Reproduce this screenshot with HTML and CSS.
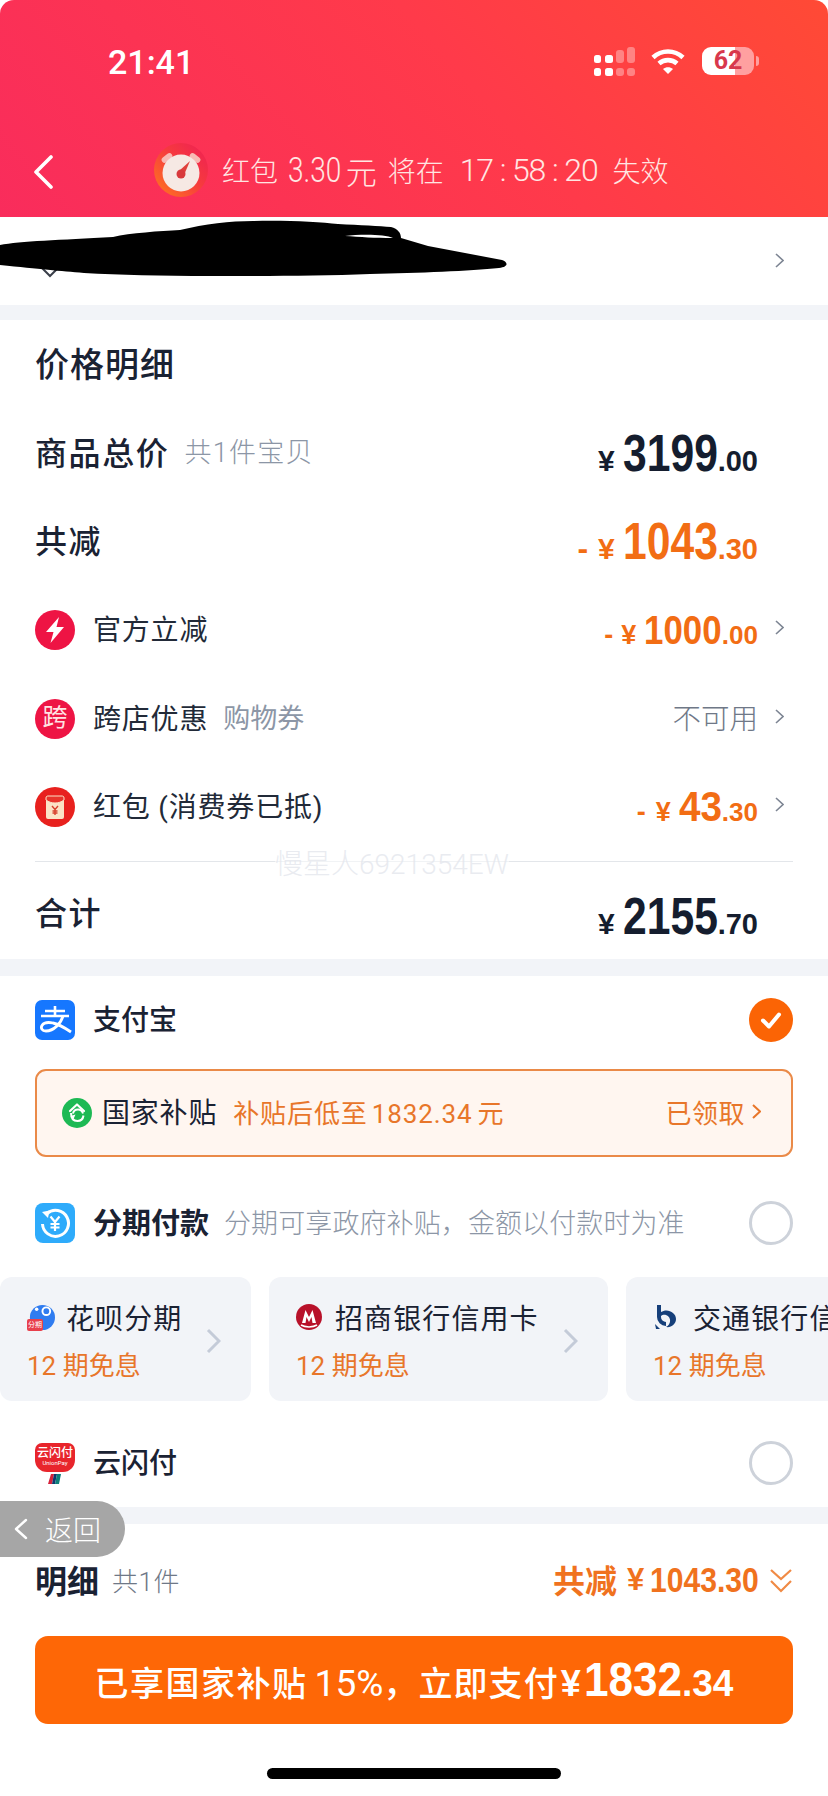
FILE: index.html
```html
<!DOCTYPE html>
<html lang="zh-CN">
<head>
    <meta charset="UTF-8">
    <meta name="viewport" content="width=device-width, initial-scale=1.0">
    <title>确认付款</title>
    <link rel="stylesheet" href="styles.css">
</head>
<body>
<div class="page">
    <header class="header">
        <div class="status">
            <span class="time">21:41</span>
            <div class="status-icons">
                <svg class="signal" width="41" height="29" viewBox="0 0 41 29" fill="#fff">
                    <rect x="0" y="8" width="7" height="8" rx="2.5"/>
                    <rect x="11" y="8" width="8" height="8" rx="2.5"/>
                    <rect x="0" y="21" width="7" height="8" rx="2.5"/>
                    <rect x="11" y="21" width="8" height="8" rx="2.5"/>
                    <g opacity=".35">
                        <rect x="22" y="3" width="8" height="13" rx="3"/>
                        <rect x="33" y="0" width="8" height="16" rx="3"/>
                        <rect x="22" y="21" width="8" height="8" rx="3"/>
                        <rect x="33" y="21" width="8" height="8" rx="3"/>
                    </g>
                </svg>
                <svg class="wifi" width="34" height="27" viewBox="0 0 34 27" fill="none" stroke="#fff" stroke-width="4.6">
                    <path d="M2 9.5C10.500 1.500 23.500 1.500 32 9.500"/>
                    <path d="M8 15.500C13 11 21 11 26 15.500"/>
                    <path d="M12 21L17 26L22 21C19 18.600 15 18.600 12 21Z" fill="#fff" stroke="none"/>
                </svg>
                <div class="battery"><span class="battery-num">62</span></div>
            </div>
        </div>
        <div class="nav">
            <svg class="nav-back" width="20" height="34" viewBox="0 0 20 34" fill="none" stroke="#fff" stroke-width="3.600" stroke-linecap="round" stroke-linejoin="round">
                <path d="M18 2L3 17L18 32"/>
            </svg>
            <svg class="clock" width="54" height="54" viewBox="0 0 54 54">
                <defs>
                    <linearGradient id="clockBg" x1="0" y1="1" x2="1" y2="0">
                        <stop offset="0" stop-color="#ff7a1e"/>
                        <stop offset=".55" stop-color="#f63a3e"/>
                        <stop offset="1" stop-color="#ee1e56"/>
                    </linearGradient>
                </defs>
                <circle cx="27" cy="27" r="27" fill="url(#clockBg)"/>
                <rect x="7" y="12" width="12" height="6" rx="3" transform="rotate(-38 13 15)" fill="#f8b9b4"/>
                <rect x="35" y="12" width="12" height="6" rx="3" transform="rotate(38 41 15)" fill="#f8b9b4"/>
                <circle cx="27" cy="30" r="18.500" fill="#f6e9e4"/>
                <path d="M25 28L36 18L30 32Z" fill="#e0403c"/>
                <circle cx="27" cy="31" r="4.500" fill="#d8393c"/>
            </svg>
            <div class="nav-text">
                <span>红包</span><span class="nav-num">3.30</span><span class="nav-unit">元</span>
                <span class="nav-gap">将在</span>
                <span class="nav-count">17 : 58 : 20</span>
                <span>失效</span>
            </div>
        </div>
    </header>

    <section class="addr-row">
        <svg class="chev" width="9" height="15" viewBox="0 0 9 15"><path d="M1 1L8 7.500L1 14"/></svg>
        <svg class="redact" width="510" height="62" viewBox="0 217 510 62">
            <path d="M42 268L50 276L58 268" fill="none" stroke="#3a3f4a" stroke-width="2"/>
            <path d="M0 245C20 241 60 240 113 237C130 233 160 231 180 230C205 224 230 221 253 221C285 220 320 222 338 224C360 225 380 226 391 227C398 229 401 233 401 238L428 246L502 260C508 262 509 267 499 268C470 271 420 273 370 274C320 276 260 276 211 276C160 276 120 275 84 273C60 271 40 269 0 265Z" fill="#000"/>
            <path d="M345 236C360 234 385 234 393 238C375 238 360 237 345 236Z" fill="#fff"/>
        </svg>
    </section>
    <div class="band"></div>

    <section class="prices">
        <div class="price-row"><h2 class="title">价格明细</h2></div>
        <div class="price-row">
            <div class="label-group"><span class="label-strong">商品总价</span><span class="note note-count">共1件宝贝</span></div>
            <div class="price price-end"><span class="yen">¥</span><span class="int">3199</span><span class="dec">.00</span></div>
        </div>
        <div class="price-row">
            <span class="label-strong">共减</span>
            <div class="price price-end orange"><span class="minus">-</span><span class="yen">¥</span><span class="int">1043</span><span class="dec">.30</span></div>
        </div>
        <div class="price-row">
            <div class="label-group">
                <svg class="round-icon" width="40" height="40" viewBox="0 0 40 40">
                    <circle cx="20" cy="20" r="20" fill="#ee1444"/>
                    <path d="M24 7L11 22H18.500L15.500 33L29 17H21.500Z" fill="#fff"/>
                </svg>
                <span class="label">官方立减</span>
            </div>
            <div class="price-side">
                <div class="price price-sm orange"><span class="minus">-</span><span class="yen">¥</span><span class="int">1000</span><span class="dec">.00</span></div>
                <svg class="chev" width="9" height="15" viewBox="0 0 9 15"><path d="M1 1L8 7.500L1 14"/></svg>
            </div>
        </div>
        <div class="price-row">
            <div class="label-group">
                <div class="kua-icon">跨</div>
                <span class="label">跨店优惠</span>
                <span class="note">购物券</span>
            </div>
            <div class="price-side">
                <span class="unavailable">不可用</span>
                <svg class="chev" width="9" height="15" viewBox="0 0 9 15"><path d="M1 1L8 7.500L1 14"/></svg>
            </div>
        </div>
        <div class="price-row">
            <div class="label-group">
                <svg class="round-icon" width="40" height="40" viewBox="0 0 40 40">
                    <circle cx="20" cy="20" r="20" fill="#e8211e"/>
                    <rect x="11" y="9" width="18" height="23" rx="2" fill="#fbe3c6"/>
                    <path d="M11 11C11 9.500 12 9 13 9H27C28 9 29 9.500 29 11V13C24 17 16 17 11 13Z" fill="#e8352c" stroke="#fbe3c6" stroke-width="1"/>
                    <path d="M17 19L20 22.500L23 19M20 22.500V28M17.500 24H22.500M17.500 26H22.500" fill="none" stroke="#d8402c" stroke-width="1.400"/>
                </svg>
                <span class="label">红包 (消费券已抵)</span>
            </div>
            <div class="price-side">
                <div class="price price-sm price-two orange"><span class="minus">-</span><span class="yen">¥</span><span class="int">43</span><span class="dec">.30</span></div>
                <svg class="chev" width="9" height="15" viewBox="0 0 9 15"><path d="M1 1L8 7.500L1 14"/></svg>
            </div>
        </div>
        <div class="divider"></div>
        <div class="price-row total-row">
            <span class="label-strong">合计</span>
            <div class="price price-end"><span class="yen">¥</span><span class="int">2155</span><span class="dec">.70</span></div>
        </div>
    </section>
    <div class="band band-two"></div>

    <section class="pay">
        <div class="pay-row">
            <div class="label-group">
                <svg class="square-icon" width="40" height="40" viewBox="0 0 40 40">
                    <rect width="40" height="40" rx="7" fill="#1677ff"/>
                    <path d="M10 11H30M20 6V16M6 16H34" fill="none" stroke="#fff" stroke-width="2.600"/>
                    <path d="M28 16C26 23 19 31 11 31C7 31 5.500 28 7 25.500C8.500 23 13 22 18 23C24 24 30 28 36 32" fill="none" stroke="#fff" stroke-width="2.800"/>
                </svg>
                <span class="pay-name">支付宝</span>
            </div>
            <svg class="radio" width="44" height="44" viewBox="0 0 44 44">
                <circle cx="22" cy="22" r="22" fill="#fb6405"/>
                <path d="M14 22.500L20 28.500L30 16.500" fill="none" stroke="#fff" stroke-width="4" stroke-linecap="round" stroke-linejoin="round"/>
            </svg>
        </div>

        <div class="subsidy">
            <svg class="subsidy-icon" width="30" height="30" viewBox="0 0 30 30">
                <circle cx="15" cy="15" r="15" fill="#1db954"/>
                <path d="M8 13L15 6.500L22 13" fill="none" stroke="#fff" stroke-width="2.200" stroke-linecap="round" stroke-linejoin="round"/>
                <path d="M9 15C9 20 11.500 23 15.500 23C18.500 23 21 21 21.500 17.500M21 15.500C20 12.500 18 11.500 16 11.500C13.500 11.500 11.500 13 11 15.500" fill="none" stroke="#fff" stroke-width="2"/>
                <path d="M8.500 18L13.500 16.500L11.500 21Z" fill="#fff"/>
            </svg>
            <span class="subsidy-name">国家补贴</span>
            <span class="subsidy-text">补贴后低至<span class="subsidy-num">1832.34</span>元</span>
            <span class="subsidy-side">已领取<svg class="subsidy-chev" width="9" height="15" viewBox="0 0 9 15"><path d="M1 1L8 7.500L1 14"/></svg></span>
        </div>

        <div class="pay-row installment-row">
            <div class="label-group">
                <svg class="square-icon" width="40" height="40" viewBox="0 0 40 40">
                    <rect width="40" height="40" rx="8" fill="#2eabfb"/>
                    <path d="M12 10.500A13 13 0 1 1 7.500 21" fill="none" stroke="#fff" stroke-width="3"/>
                    <path d="M7 9L14.500 7.500L13 15Z" fill="#fff"/>
                    <path d="M15.500 13.500L20 19L24.500 13.500M20 19V28M15.500 21H24.500M15.500 24.500H24.500" fill="none" stroke="#fff" stroke-width="2.200"/>
                </svg>
                <span class="pay-name pay-strong">分期付款</span>
                <span class="note pay-note">分期可享政府补贴，金额以付款时为准</span>
            </div>
            <span class="radio-off"></span>
        </div>

        <div class="cards">
            <div class="card card-first">
                <div class="card-top">
                    <div class="huabei">
                        <svg width="28" height="27" viewBox="0 0 29 27">
                            <circle cx="16" cy="13.500" r="13" fill="#2f7cf0"/>
                            <circle cx="20" cy="7" r="4" fill="none" stroke="#fff" stroke-width="2"/>
                            <circle cx="10" cy="5" r="1.800" fill="#fff"/>
                        </svg>
                        <span class="huabei-tag">分期</span>
                    </div>
                    <span class="card-name">花呗分期</span>
                </div>
                <div class="card-sub">12 期免息</div>
                <svg class="card-chev" width="15" height="26" viewBox="0 0 15 26"><path d="M2 2L13 13L2 24"/></svg>
            </div>
            <div class="card card-second">
                <div class="card-top">
                    <svg class="bank-icon" width="26" height="26" viewBox="0 0 26 26">
                        <circle cx="13" cy="13" r="13" fill="#b8112a"/>
                        <path d="M6 19L9.500 6L13 13L16.500 6L20 19H16.500L15.500 13L13 18L10.500 13L9.500 19Z" fill="#fff"/>
                        <path d="M5 21C9 23.500 17 23.500 21 21" fill="none" stroke="#fff" stroke-width="1.500"/>
                    </svg>
                    <span class="card-name">招商银行信用卡</span>
                </div>
                <div class="card-sub">12 期免息</div>
                <svg class="card-chev" width="15" height="26" viewBox="0 0 15 26"><path d="M2 2L13 13L2 24"/></svg>
            </div>
            <div class="card card-third">
                <div class="card-top">
                    <svg class="bank-icon" width="24" height="26" viewBox="0 0 24 26">
                        <path d="M6 1V13A7 7 0 0 0 13 20" fill="none" stroke="#163f7a" stroke-width="4"/>
                        <path d="M8 8C14 4 23 8 23 15C23 20 18 24 13 23C18 21 19 13 13 11C11 10.500 9 11 8 12Z" fill="#163f7a"/>
                        <path d="M2 20L7 25H3Z" fill="#163f7a"/>
                    </svg>
                    <span class="card-name">交通银行信用卡</span>
                </div>
                <div class="card-sub">12 期免息</div>
            </div>
        </div>

        <div class="pay-row union-row">
            <div class="label-group">
                <div class="union-icon">
                    <div class="union-top">
                        <span class="union-cn">云闪付</span>
                        <span class="union-en">UnionPay</span>
                    </div>
                    <svg class="union-bars" width="14" height="10" viewBox="0 0 14 10">
                        <path d="M3 0H6L4 10H0Z" fill="#d6213a"/>
                        <path d="M6 0H9L7 10H4Z" fill="#12386f"/>
                        <path d="M9 0H13L11 10H7Z" fill="#0f7f7a"/>
                    </svg>
                </div>
                <span class="pay-name">云闪付</span>
            </div>
            <span class="radio-off"></span>
        </div>
    </section>
    <div class="band band-three"></div>

    <footer class="footer">
        <div class="detail-row">
            <div class="label-group">
                <span class="detail-title">明细</span>
                <span class="note detail-count">共1件</span>
            </div>
            <div class="detail-side">
                <span class="detail-cut">共减</span>
                <span class="detail-yen">¥</span>
                <span class="detail-num">1043.30</span>
                <svg class="detail-chev" width="24" height="25" viewBox="0 0 24 25" fill="none" stroke="#f08a45" stroke-width="2.200">
                    <path d="M2 2L12 11L22 2"/>
                    <path d="M2 13L12 23L22 13"/>
                </svg>
            </div>
        </div>
        <button class="pay-btn" type="button">
            <span>已享国家补贴</span><span class="btn-pct">15%</span><span class="btn-tail">，立即支付</span><span class="btn-yen">¥</span><span class="btn-int">1832</span><span class="btn-dec">.34</span>
        </button>
        <div class="home-bar"></div>
    </footer>

    <!-- 水印和悬浮返回 -->
    <div class="watermark">慢星人6921354EW</div>
    <div class="float-back">
        <svg width="14" height="22" viewBox="0 0 14 22" fill="none" stroke="#fff" stroke-width="2.400" stroke-linecap="round" stroke-linejoin="round"><path d="M12 2L2 11L12 20"/></svg>
        <span>返回</span>
    </div>
</div>
</body>
</html>
```

FILE: styles.css
```css
* {
    box-sizing: border-box;
}
html, body {
    margin: 0;
    padding: 0;
}
body {
    font-family: Roboto, "Noto Sans CJK SC", sans-serif;
    color: #1a2233;
    background: #fff;
}
.page {
    position: relative;
    width: 828px;
    height: 1796px;
    overflow: hidden;
    background: #fff;
}

/* header */
.header {
    height: 217px;
    background: linear-gradient(48deg, #f92c5c 0%, #ff3a4a 58%, #ff4a35 100%);
    border-radius: 14px 14px 0 0;
    color: #fff;
}
.status {
    height: 124px;
    padding: 47px 74px 0 108px;
    display: flex;
    justify-content: space-between;
    align-items: flex-start;
}
.time {
    font-size: 34px;
    line-height: 30px;
    font-weight: 500;
}
.status-icons {
    display: flex;
    align-items: flex-start;
}
.signal {
    margin-right: 16px;
}
.wifi {
    margin-top: 1px;
    margin-right: 17px;
}
.battery {
    position: relative;
    width: 52px;
    height: 28px;
    border-radius: 9px;
    background: linear-gradient(90deg, #fff 63%, #ffa0a0 63%);
    text-align: center;
}
.battery::after {
    content: "";
    position: absolute;
    right: -5px;
    top: 9px;
    width: 3px;
    height: 10px;
    border-radius: 0 3px 3px 0;
    background: #ffa0a0;
}
.battery-num {
    font-size: 25px;
    line-height: 28px;
    font-weight: 700;
    color: #d8384c;
}
.nav {
    height: 93px;
    padding: 19px 0 0 33px;
    display: flex;
    align-items: flex-start;
}
.nav-back {
    margin-top: 12px;
}
.clock {
    margin-left: 101px;
}
.nav-text {
    margin-left: 14px;
    height: 54px;
    display: flex;
    align-items: center;
    font-size: 28px;
    font-weight: 300;
    color: #ffe6e2;
}
.nav-num {
    margin-left: 10px;
    margin-right: -9px;
    font-size: 35px;
    transform: scaleX(.8);
    transform-origin: 0 50%;
}
.nav-unit {
    font-size: 31px;
}
.nav-gap {
    margin-left: 11px;
}
.nav-count {
    margin: 0 15px 0 16px;
    font-size: 32px;
    letter-spacing: -1.100px;
    white-space: pre;
}

/* redacted address */
.addr-row {
    position: relative;
    height: 88px;
    padding: 36px 44px 0 0;
    display: flex;
    justify-content: flex-end;
    align-items: flex-start;
}
.redact {
    position: absolute;
    left: 0;
    top: 0;
}
.chev {
    fill: none;
    stroke: #7d8593;
    stroke-width: 1.600;
    flex: none;
}
.band {
    height: 15px;
    background: #f2f4f8;
}

/* price details */
.prices {
    padding: 0 44px 0 35px;
    height: 639px;
}
.price-row {
    height: 88.600px;
    display: flex;
    align-items: center;
    justify-content: space-between;
}
.title {
    margin: 0 0 4px;
    font-size: 34px;
    font-weight: 500;
    letter-spacing: 1px;
}
.label-group {
    display: flex;
    align-items: center;
}
.label-strong {
    margin-bottom: 4px;
    font-size: 32px;
    font-weight: 500;
    letter-spacing: 1.600px;
}
.label {
    margin: 0 0 4px 18px;
    font-size: 28px;
    letter-spacing: .800px;
    color: #222a38;
}
.note {
    margin: 0 0 4px 15px;
    font-size: 27px;
    color: #8c96a6;
}
.note-count {
    font-size: 27px;
    font-weight: 300;
    letter-spacing: 1.300px;
}
.round-icon {
    flex: none;
}
.kua-icon {
    width: 40px;
    height: 40px;
    border-radius: 50%;
    background: #ee1444;
    color: #ffe3e3;
    font-size: 25px;
    line-height: 38px;
    text-align: center;
}
.price {
    display: flex;
    align-items: baseline;
    font-family: "Liberation Sans", sans-serif;
    font-weight: 700;
    color: #151d2e;
}
.price.orange {
    color: #f26d14;
}
.price-end {
    margin-right: 26px;
}
.yen {
    font-size: 30px;
    margin-right: 8px;
}
.minus {
    font-size: 32px;
    margin-right: 10px;
}
/* 数字字体没有窄体，横向压一下 */
.int {
    font-size: 52px;
    line-height: 56px;
    margin-right: -.4em;
    transform: scaleX(.82);
    transform-origin: 0 50%;
}
.dec {
    font-size: 29px;
}
.price-side {
    display: flex;
    align-items: center;
}
.price-side .chev {
    margin: 0 0 5px 17px;
}
.price-sm .int {
    font-size: 41px;
    margin-right: -.334em;
    transform: scaleX(.85);
}
.price-two .int {
    font-size: 42px;
    margin-right: -.089em;
    transform: scaleX(.92);
}
.price-sm .dec {
    font-size: 26px;
}
.price-sm .yen,
.price-sm .minus {
    font-size: 27px;
    margin-right: 8px;
}
.price-two .minus {
    margin-right: 10px;
}
.unavailable {
    margin-bottom: 4px;
    font-size: 28.500px;
    font-weight: 300;
    color: #6f7887;
}
.divider {
    height: 1px;
    margin: 9px -9px 0 0;
    background: #e3e6ea;
}
.total-row {
    height: 88px;
    margin-top: 10px;
}
.total-row .label-strong {
    margin-bottom: 9px;
}

/* payment methods */
.band-two {
    height: 17px;
}
.pay {
    padding: 0 35px;
    height: 531px;
}
.pay-row {
    height: 88px;
    display: flex;
    align-items: center;
    justify-content: space-between;
}
.pay-name {
    margin: 0 0 4px 18px;
    font-size: 28px;
    font-weight: 500;
}
.pay-strong {
    font-size: 29px;
    font-weight: 700;
}
.pay-note {
    margin-left: 15px;
    font-weight: 300;
    font-size: 27px;
    letter-spacing: .100px;
}
.square-icon {
    flex: none;
}
.radio {
    flex: none;
}
.radio-off {
    width: 44px;
    height: 44px;
    border: 3.500px solid #cdd2da;
    border-radius: 50%;
}
.subsidy {
    height: 88px;
    margin-top: 5px;
    padding: 0 30px 0 25px;
    display: flex;
    align-items: center;
    border: 2px solid #ea8a48;
    border-radius: 11px;
    background: #fff6f0;
}
.subsidy-icon {
    flex: none;
}
.subsidy-name {
    margin: 0 0 4px 10px;
    font-size: 28px;
    letter-spacing: .800px;
}
.subsidy-text {
    margin: 0 0 4px 16px;
    font-size: 26px;
    letter-spacing: .900px;
    color: #e8762a;
}
.subsidy-num {
    margin: 0 5px 0 4px;
    font-weight: 400;
}
.subsidy-side {
    margin: 0 0 4px auto;
    display: flex;
    align-items: center;
    font-size: 26px;
    letter-spacing: .500px;
    color: #e8762a;
}
.subsidy-chev {
    margin-left: 7px;
    fill: none;
    stroke: #e8762a;
    stroke-width: 2;
}
.installment-row {
    margin-top: 22px;
}
.cards {
    display: flex;
    gap: 18px;
    margin: 10px -35px 0;
}
.card {
    position: relative;
    height: 124px;
    flex: none;
    padding: 22px 0 0 27px;
    border-radius: 12px;
    background: #f2f4f8;
}
.card-first {
    width: 251px;
}
.card-second {
    width: 339px;
}
.card-third {
    width: 339px;
}
.card-top {
    display: flex;
    align-items: center;
    height: 36px;
}
.card-name {
    margin-left: 13px;
    font-size: 28px;
    letter-spacing: 1.100px;
    white-space: nowrap;
}
.card-first .card-name {
    margin-left: 11px;
}
.card-third .card-name {
    margin-left: 16px;
}
.card-sub {
    margin-top: 10px;
    font-size: 26px;
    color: #e8762a;
    white-space: nowrap;
}
.card-chev {
    position: absolute;
    right: 30px;
    top: 51px;
    fill: none;
    stroke: #c4cbd8;
    stroke-width: 3;
}
.huabei {
    position: relative;
    width: 28px;
    height: 27px;
}
.huabei-tag {
    position: absolute;
    left: 0;
    bottom: 0;
    width: 16px;
    height: 12px;
    border-radius: 2px;
    background: #e8404c;
    color: #fff;
    font-size: 7px;
    line-height: 12px;
    text-align: center;
}
.bank-icon {
    flex: none;
}
.union-row {
    margin-top: 18px;
}
.union-icon {
    width: 40px;
    height: 41px;
    display: flex;
    flex-direction: column;
    align-items: center;
}
.union-top {
    width: 40px;
    height: 29px;
    padding-top: 4px;
    border-radius: 7px 7px 12px 12px;
    background: #e8252c;
    color: #fff;
    text-align: center;
    line-height: 1;
}
.union-cn {
    display: block;
    font-size: 12px;
    font-weight: 500;
}
.union-en {
    display: block;
    font-size: 6px;
    margin-top: 1px;
}
.union-bars {
    margin-top: 2px;
}

/* bottom bar */
.band-three {
    height: 17px;
}
.footer {
    padding: 12px 35px 0;
}
.detail-row {
    height: 88px;
    display: flex;
    align-items: center;
    justify-content: space-between;
}
.detail-title {
    margin-bottom: 2px;
    font-size: 32px;
    font-weight: 700;
}
.detail-count {
    margin: 0 0 2px 13px;
    font-size: 26px;
    font-weight: 300;
    letter-spacing: .500px;
    color: #6f7887;
}
.detail-side {
    display: flex;
    align-items: center;
    color: #f0721e;
}
.detail-cut {
    margin-bottom: 2px;
    font-size: 32px;
    font-weight: 700;
}
.detail-yen {
    margin-left: 10px;
    font-family: "Liberation Sans", sans-serif;
    font-size: 31px;
    font-weight: 700;
}
.detail-num {
    margin-left: 6px;
    margin-right: -.505em;
    font-family: "Liberation Sans", sans-serif;
    font-size: 35px;
    font-weight: 700;
    transform: scaleX(.86);
    transform-origin: 0 50%;
}
.detail-chev {
    margin-left: 10px;
}
.pay-btn {
    width: 758px;
    height: 88px;
    margin-top: 12px;
    padding: 0;
    display: flex;
    align-items: baseline;
    justify-content: center;
    line-height: 86px;
    border: 0;
    border-radius: 13px;
    background: #fe6706;
    color: #fff;
    font-family: inherit;
    font-size: 34px;
    font-weight: 500;
    letter-spacing: 1.500px;
}
.btn-pct {
    margin-left: 7px;
    font-size: 37px;
    font-weight: 400;
    letter-spacing: 0;
}
.btn-tail {
    letter-spacing: 1.100px;
}
.btn-yen {
    margin-left: 2px;
    font-family: "Liberation Sans", sans-serif;
    font-weight: 700;
    font-size: 36px;
    letter-spacing: 0;
}
.btn-int {
    margin-left: 3px;
    margin-right: -.222em;
    font-family: "Liberation Sans", sans-serif;
    font-size: 49px;
    font-weight: 700;
    letter-spacing: 0;
    transform: scaleX(.9);
    transform-origin: 0 50%;
}
.btn-dec {
    font-family: "Liberation Sans", sans-serif;
    font-size: 37px;
    font-weight: 700;
    letter-spacing: 0;
}
.home-bar {
    width: 294px;
    height: 11px;
    margin: 44px auto 0;
    border-radius: 6px;
    background: #000;
}

/* overlays */
.watermark {
    position: absolute;
    left: 275px;
    top: 846px;
    font-size: 28px;
    line-height: 38px;
    font-weight: 300;
    color: rgba(226, 229, 236, .75);
    background: rgba(255, 255, 255, .5);
    white-space: nowrap;
}
.float-back {
    position: absolute;
    left: 0;
    top: 1501px;
    width: 125px;
    height: 56px;
    padding-left: 14px;
    display: flex;
    align-items: center;
    gap: 17px;
    border-radius: 0 28px 28px 0;
    background: #a6a6a6;
    color: #fff;
    font-size: 28px;
    font-weight: 300;
}
```
